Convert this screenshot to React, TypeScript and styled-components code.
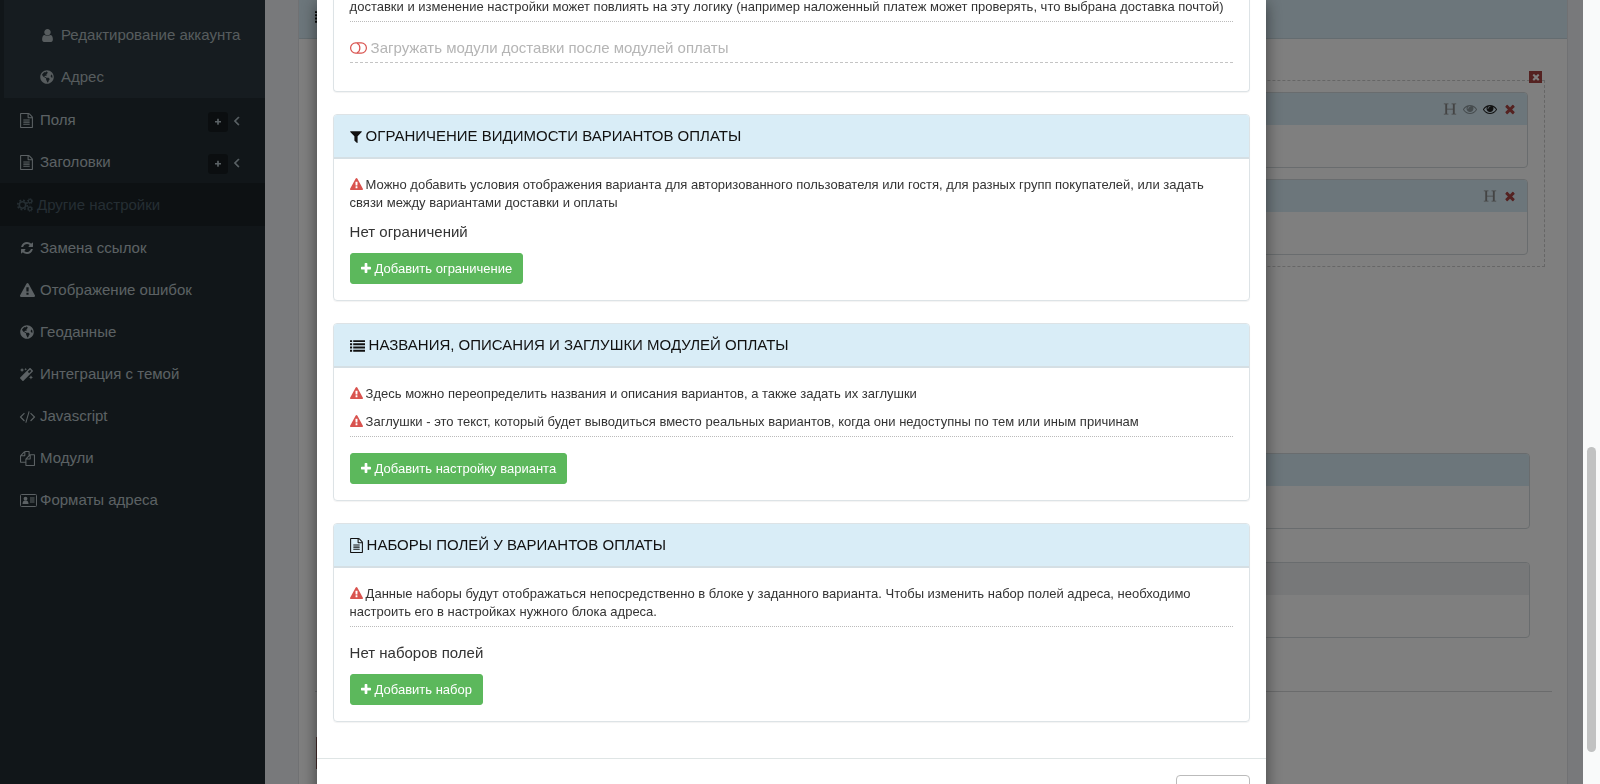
import React from 'react';
import styled, { createGlobalStyle, css } from 'styled-components';
import { FaGlobeAmericas, FaMagic } from 'react-icons/fa';

const Global = createGlobalStyle`
  * { box-sizing: border-box; }
  html, body { margin: 0; height: 100%; overflow: hidden; }
  body {
    background: #f1f2f6;
    color: #333;
    font: 15px/20px "Liberation Sans", Arial, sans-serif;
  }
  p, h1, h2, ul { margin: 0; padding: 0; }
`;

/* ---------- icons ---------- */

const paths = {
  user: 'M1536 1399q0 109-62.5 187t-150.5 78h-854q-88 0-150.5-78t-62.5-187q0-85 8.5-160.5t31.5-152 58.5-131 94-89 134.5-34.5q131 128 313 128t313-128q76 0 134.5 34.5t94 89 58.5 131 31.5 152 8.5 160.5zm-256-887q0 159-112.5 271.5t-271.5 112.5-271.5-112.5-112.5-271.5 112.5-271.5 271.5-112.5 271.5 112.5 112.5 271.5z',
  file: 'M1596 380q28 28 48 76t20 88v1152q0 40-28 68t-68 28h-1344q-40 0-68-28t-28-68v-1600q0-40 28-68t68-28h896q40 0 88 20t76 48zm-444-244v376h376q-10-29-22-41l-313-313q-12-12-41-22zm384 1528v-1024h-416q-40 0-68-28t-28-68v-416h-768v1536h1280zm-1024-864q0-14 9-23t23-9h704q14 0 23 9t9 23v64q0 14-9 23t-23 9h-704q-14 0-23-9t-9-23v-64zm736 224q14 0 23 9t9 23v64q0 14-9 23t-23 9h-704q-14 0-23-9t-9-23v-64q0-14 9-23t23-9h704zm0 256q14 0 23 9t9 23v64q0 14-9 23t-23 9h-704q-14 0-23-9t-9-23v-64q0-14 9-23t23-9h704z',
  refresh: 'M1639 1056q0 5-1 7-64 268-268 434.5t-478 166.5q-146 0-282.5-55t-243.5-157l-129 129q-19 19-45 19t-45-19-19-45v-448q0-26 19-45t45-19h448q26 0 45 19t19 45-19 45l-137 137q71 66 161 102t187 36q134 0 250-65t186-179q11-17 53-117 8-23 30-23h192q13 0 22.5 9.5t9.5 22.5zm25-800v448q0 26-19 45t-45 19h-448q-26 0-45-19t-19-45 19-45l138-138q-148-137-349-137-134 0-250 65t-186 179q-11 17-53 117-8 23-30 23h-199q-13 0-22.5-9.5t-9.5-22.5v-7q65-268 270-434.5t480-166.5q146 0 284 55.5t245 156.5l130-129q19-19 45-19t45 19 19 45z',
  warning: 'M1024 1375v-190q0-14-9.5-23.5t-22.5-9.5h-192q-13 0-22.5 9.5t-9.5 23.5v190q0 14 9.5 23.5t22.5 9.5h192q13 0 22.5-9.5t9.5-23.5zm-2-374l18-459q0-12-10-19-13-11-24-11h-220q-11 0-24 11-10 7-10 21l17 457q0 10 10 16.5t24 6.5h185q14 0 23.5-6.5t10.5-16.5zm-14-934l768 1408q35 63-2 126-17 29-46.5 46t-63.5 17h-1536q-34 0-63.5-17t-46.5-46q-37-63-2-126l768-1408q17-31 47-49t65-18 65 18 47 49z',
  filter: 'M1595 295q17 41-14 70l-493 493v742q0 42-39 59-13 5-25 5-27 0-45-19l-256-256q-19-19-19-45v-486l-493-493q-31-29-14-70 17-39 59-39h1280q42 0 59 39z',
  list: 'M0 256h256v224h-256zM384 256h1408v224h-1408zM0 640h256v224h-256zM384 640h1408v224h-1408zM0 1024h256v224h-256zM384 1024h1408v224h-1408zM0 1408h256v224h-256zM384 1408h1408v224h-1408z',
  plus: 'M1600 736v192q0 40-28 68t-68 28h-416v416q0 40-28 68t-68 28h-192q-40 0-68-28t-28-68v-416h-416q-40 0-68-28t-28-68v-192q0-40 28-68t68-28h416v-416q0-40 28-68t68-28h192q40 0 68 28t28 68v416h416q40 0 68 28t28 68z',
  times: 'M1490 1322q0 40-28 68l-136 136q-28 28-68 28t-68-28l-294-294-294 294q-28 28-68 28t-68-28l-136-136q-28-28-28-68t28-68l294-294-294-294q-28-28-28-68t28-68l136-136q28-28 68-28t68 28l294 294 294-294q28-28 68-28t68 28l136 136q28 28 28 68t-28 68l-294 294 294 294q28 28 28 68z',
  code: 'M553 1399l-50 50q-10 10-23 10t-23-10l-466-466q-10-10-10-23t10-23l466-466q10-10 23-10t23 10l50 50q10 10 10 23t-10 23l-393 393 393 393q10 10 10 23t-10 23zm591-1067l-373 1291q-4 13-15.5 19.5t-23.5 2.5l-62-17q-13-4-19.5-15.5t-2.5-24.5l373-1291q4-13 15.5-19.5t23.5-2.5l62 17q13 4 19.5 15.5t2.5 24.5zm657 651l-466 466q-10 10-23 10t-23-10l-50-50q-10-10-10-23t10-23l393-393-393-393q-10-10-10-23t10-23l50-50q10-10 23-10t23 10l466 466q10 10 10 23t-10 23z',
  eye: 'M1664 960q-152-236-381-353 61 104 61 225 0 185-131.5 316.5t-316.5 131.5-316.5-131.5-131.5-316.5q0-121 61-225-229 117-381 353 133 205 333.5 326.5t434.5 121.5 434.5-121.5 333.5-326.5zm-720-384q0-20-14-34t-34-14q-125 0-214.5 89.5t-89.5 214.5q0 20 14 34t34 14 34-14 14-34q0-86 61-147t147-61q20 0 34-14t14-34zm848 384q0 34-20 69-140 230-376.5 368.5t-499.5 138.5-499.5-139-376.5-368q-20-35-20-69t20-69q140-229 376.5-368t499.5-139 499.5 139 376.5 368q20 35 20 69z',
  angle: 'M1203 544q0 13-10 23l-393 393 393 393q10 10 10 23t-10 23l-50 50q-10 10-23 10t-23-10l-466-466q-10-10-10-23t10-23l466-466q10-10 23-10t23 10l50 50q10 10 10 23z',
  copy: 'M1696 384q40 0 68 28t28 68v1216q0 40-28 68t-68 28h-960q-40 0-68-28t-28-68v-288h-544q-40 0-68-28t-28-68v-672q0-40 20-88t48-76l408-408q28-28 76-48t88-20h416q40 0 68 28t28 68v328q68-40 128-40h416zm-544 213l-299 299h299v-299zm-640-384l-299 299h299v-299zm196 647l316-316v-416h-384v416q0 40-28 68t-68 28h-416v640h512v-256q0-40 20-88t48-76zm956 804v-1152h-384v416q0 40-28 68t-68 28h-416v640h896z',
  header: 'M100 200h600v100h-170v560h732v-560h-170v-100h600v100h-190v1200h190v100h-600v-100h170v-540h-732v540h170v100h-600v-100h190v-1200h-190z',
};

/* horizontal extent of the glyphs that are narrower than their square box */
const extents: Partial<Record<keyof typeof paths, [number, number]>> = {
  file: [128, 1536],
  filter: [192, 1408],
  plus: [192, 1408],
};

const Svg = styled.svg`
  display: block;
  flex: none;
  overflow: visible;
  fill: currentColor;
`;

const Icon = ({ name, size = 15 }: { name: keyof typeof paths; size?: number }) => {
  const [x, w] = extents[name] ?? [0, 1792];
  return (
    <Svg width={Math.round((size * w) / 1792)} height={size} viewBox={`${x} 0 ${w} 1792`} aria-hidden="true">
      <path fillRule="evenodd" d={paths[name]} />
    </Svg>
  );
};

const ToggleIcon = () => (
  <Svg width="17" height="12" viewBox="0 0 17 12" aria-hidden="true">
    <g fill="none" stroke="currentColor" strokeWidth="1.2">
      <rect x=".6" y=".9" width="15.8" height="10.2" rx="5.1" />
      <path d="M7 1.2c3.8 1.6 3.8 8 0 9.6" />
    </g>
  </Svg>
);

const CardIcon = () => (
  <Svg width="17" height="13" viewBox="0 0 17 13" aria-hidden="true">
    <rect x=".5" y=".5" width="16" height="12" rx="1" fill="none" stroke="currentColor" />
    <circle cx="5.5" cy="4.7" r="1.9" />
    <path d="M2.5 10c0-2.6 1-3.6 3-3.6s3 1 3 3.6zM10 3.5h4.5v1H10zM10 5.5h4.5v1H10zM10 7.5h4.5v1H10z" />
  </Svg>
);

const GearsIcon = () => (
  <Svg width="16" height="14" viewBox="0 0 16 14" aria-hidden="true">
    <g fill="none" stroke="currentColor">
      <circle cx="5.5" cy="7" r="3.2" strokeWidth="1.6" />
      <circle cx="5.5" cy="7" r="4.8" strokeWidth="1.6" strokeDasharray="1.9 1.87" />
      <circle cx="13" cy="3.2" r="1.7" strokeWidth="1.2" />
      <circle cx="13" cy="3.2" r="2.6" strokeDasharray="1.1 .94" />
      <circle cx="13" cy="10.8" r="1.7" strokeWidth="1.2" />
      <circle cx="13" cy="10.8" r="2.6" strokeDasharray="1.1 .94" />
    </g>
  </Svg>
);

/* ---------- page behind the dialog ---------- */

const Page = styled.div`
  display: flex;
  height: 100vh;
  padding-right: 17px;
  overflow: hidden;
`;

const Sidebar = styled.nav`
  flex: 0 0 265px;
  display: flex;
  flex-direction: column;
  background: #222d32;
  overflow: hidden;
`;

const Submenu = styled.ul`
  list-style: none;
  && {
    margin: 0 0 1px 4px;
    padding-top: 14px;
  }
  background: #2c3940;
`;

const Menu = styled.ul`
  list-style: none;
  h2 + && { padding-top: 1px; }
`;

const MenuRow = styled.li`
  display: flex;
  align-items: center;
  height: 42px;
  padding-right: 21px;
`;

const MenuLink = styled.a<{ $nested?: boolean }>`
  display: flex;
  flex: 1;
  align-items: center;
  padding-left: ${(p) => (p.$nested ? 36 : 20)}px;
  color: ${(p) => (p.$nested ? '#aeb8bc' : '#b8c3c8')};
  line-height: 42px;
  text-decoration: none;
  white-space: nowrap;
`;

const MenuIcon = styled.span<{ $nested?: boolean }>`
  display: flex;
  width: ${(p) => (p.$nested ? 21 : 20)}px;
`;

const MenuHeader = styled.h2`
  display: flex;
  align-items: center;
  gap: 4px;
  height: 43px;
  background: #1a2226;
  color: #4b5d66;
  font-size: 15px;
  font-weight: normal;
  && { padding-left: 17px; }
`;

const AddButton = styled.button`
  width: 20px;
  height: 20px;
  margin: 4px 1px 0 0;
  padding: 0;
  border: 0;
  border-radius: 3px;
  background: #161d20;
  color: #b8c7ce;
  display: grid;
  place-items: center;
`;

const CollapseButton = styled.button`
  padding: 0;
  border: 0;
  background: none;
  color: #b8c7ce;
  stroke: currentColor;
  stroke-width: 60;
`;

const Main = styled.main`
  flex: 1;
  min-width: 0;
  margin: 0 15px 0 33px;
  border: solid #e0e3e6;
  border-width: 0 1px;
  background: #fff;
`;

const MainHead = styled.div`
  height: 39px;
  padding: 9px 16px 0;
  background: #d9edf7;
  border-bottom: 1px solid #c8d9e0;
  color: #111;
`;

const MainBody = styled.div`
  display: flow-root;
  padding: 41px 15px 0 16px;
`;

const Step = styled.section`
  position: relative;
  margin: 0 7px 0 4px;
  height: 187px;
  padding: 11px 16px;
  border: 1px dashed #ccc;
`;

const RemoveStep = styled.button`
  position: absolute;
  top: -10px;
  right: 2px;
  width: 13px;
  height: 12px;
  padding: 0;
  border: 0;
  background: #a94442;
  color: #fff;
  display: grid;
  place-items: center;
`;

const Block = styled.section`
  height: 76px;
  border: 1px solid #d2d9dc;
  border-radius: 4px;
  overflow: hidden;
  & + & { margin-top: 11px; }
`;

const BlockHead = styled.div<{ $muted?: boolean }>`
  display: flex;
  align-items: center;
  justify-content: flex-end;
  gap: 6px;
  height: 32px;
  padding-right: 10px;
  background: ${(p) => (p.$muted ? '#eff0f2' : '#d9edf7')};
`;

const Tool = styled.button<{ $color: string }>`
  padding: 0;
  border: 0;
  background: none;
  color: ${(p) => p.$color};
`;

const LowerBlocks = styled.div`
  display: grid;
  gap: 22px;
  margin: 186px 22px 0 16px;
`;

const PageRule = styled.hr`
  margin: 53px 0 45px;
  border: 0;
  border-top: 1px solid #d4d6d8;
`;

const RemoveButton = styled.button`
  display: block;
  width: 40px;
  height: 32px;
  margin-left: 1px;
  border: 1px solid #8a5a58;
  background: #a94442;
`;

/* ---------- dialog ---------- */

const Backdrop = styled.div`
  position: fixed;
  inset: 0 17px 0 0;
  background: rgba(0, 0, 0, 0.5);
  overflow: hidden;
`;

const Dialog = styled.div`
  width: 60%;
  min-width: 600px;
  min-height: 100%;
  margin: 0 auto;
  background: #fff;
  box-shadow: 0 5px 15px rgba(0, 0, 0, 0.5);
`;

const DialogBody = styled.div`
  display: grid;
  gap: 22px;
  margin-top: -2px;
  padding: 0 16px 36px;
`;

const Panel = styled.section<{ $scrolled?: boolean }>`
  border: 1px solid #dde3e6;
  border-radius: 4px;
  box-shadow: 0 1px 1px rgba(0, 0, 0, 0.05);
  overflow: hidden;
  ${(p) => p.$scrolled && css`
    border-top: 0;
    border-radius: 0 0 4px 4px;
  `}
`;

const PanelHead = styled.h2`
  display: flex;
  align-items: center;
  gap: 4px;
  height: 44px;
  border-bottom: 2px solid #d5dfe4;
  background: #d9edf7;
  color: #111;
  font-size: 15px;
  font-weight: normal;
  text-transform: uppercase;
  white-space: nowrap;
  && { padding: 0 16px; }
`;

const PanelBody = styled.div<{ $scrolled?: boolean }>`
  padding: ${(p) => (p.$scrolled ? '0 16px 28px' : '17px 16px 16px')};
`;

const Hint = styled.p<{ $ruled?: boolean }>`
  && { margin-bottom: ${(p) => (p.$ruled ? 16 : 10)}px; }
  font-size: 13px;
  line-height: 18px;
  ${(p) => p.$ruled && css`
    && { padding-bottom: 5px; }
    border-bottom: 1px dotted #bbb;
  `}
`;

const HintIcon = styled.span`
  display: inline-block;
  margin-right: 3px;
  color: #d9534f;
  vertical-align: -2px;
`;

const ToggleRow = styled.button`
  display: flex;
  align-items: center;
  gap: 4px;
  width: 100%;
  padding: 0 0 4px;
  border: 0;
  border-bottom: 1px dashed #c4c4c4;
  background: none;
  color: #b5b5b5;
  font: inherit;
  & > svg { color: #d9534f; }
`;

const Empty = styled.p`
  && { margin-bottom: 11px; }
`;

const AddItem = styled.button`
  display: flex;
  align-items: center;
  gap: 4px;
  height: 31px;
  padding: 0 10px;
  border: 1px solid #5cb85c;
  border-radius: 3px;
  background: #5cb85c;
  color: #fff;
  font: 13px/18px "Liberation Sans", Arial, sans-serif;
`;

const DialogFooter = styled.footer`
  display: flex;
  justify-content: flex-end;
  padding: 16px;
  border-top: 1px solid #dfe5e5;
`;

const CloseButton = styled.button`
  padding: 12px 11px;
  border: 1px solid #bbb;
  border-radius: 4px;
  background: #fff;
  color: #333;
  font: 13px/18px "Liberation Sans", Arial, sans-serif;
`;

const Track = styled.div`
  position: fixed;
  inset: 0 0 0 auto;
  width: 17px;
  padding: 447px 4px 0;
  background: #f9fafa;
`;

const Thumb = styled.div`
  height: 305px;
  border-radius: 5px;
  background: #c1c2c2;
`;

const Warning = () => (
  <HintIcon><Icon name="warning" size={13} /></HintIcon>
);

const links: [React.ReactNode, string][] = [
  [<Icon name="refresh" size={14} />, 'Замена ссылок'],
  [<Icon name="warning" />, 'Отображение ошибок'],
  [<FaGlobeAmericas size={14} />, 'Геоданные'],
  [<FaMagic size={13} />, 'Интеграция с темой'],
  [<Icon name="code" />, 'Javascript'],
  [<Icon name="copy" />, 'Модули'],
  [<CardIcon />, 'Форматы адреса'],
];

export default function App() {
  return (
    <>
      <Global />
      <Page>
        <Sidebar>
          <Submenu>
            <MenuRow>
              <MenuLink href="#account" $nested><MenuIcon $nested><Icon name="user" /></MenuIcon>Редактирование аккаунта</MenuLink>
            </MenuRow>
            <MenuRow>
              <MenuLink href="#address" $nested><MenuIcon $nested><FaGlobeAmericas size={14} /></MenuIcon>Адрес</MenuLink>
            </MenuRow>
          </Submenu>
          <Menu>
            {['Поля', 'Заголовки'].map((label) => (
              <MenuRow key={label}>
                <MenuLink href="#"><MenuIcon><Icon name="file" /></MenuIcon>{label}</MenuLink>
                <AddButton aria-label="Добавить"><Icon name="plus" size={8} /></AddButton>
                <CollapseButton aria-label="Развернуть"><Icon name="angle" size={15} /></CollapseButton>
              </MenuRow>
            ))}
          </Menu>
          <MenuHeader><GearsIcon />Другие настройки</MenuHeader>
          <Menu>
            {links.map(([icon, label]) => (
              <MenuRow key={label}>
                <MenuLink href="#"><MenuIcon>{icon}</MenuIcon>{label}</MenuLink>
              </MenuRow>
            ))}
          </Menu>
        </Sidebar>
        <Main>
          <MainHead><Icon name="list" /></MainHead>
          <MainBody>
            <Step>
              <RemoveStep aria-label="Удалить шаг"><Icon name="times" size={10} /></RemoveStep>
              <Block>
                <BlockHead>
                  <Tool $color="#888" aria-label="Заголовок"><Icon name="header" size={14} /></Tool>
                  <Tool $color="#8d989d" aria-label="Скрыть"><Icon name="eye" size={14} /></Tool>
                  <Tool $color="#222" aria-label="Показать"><Icon name="eye" size={14} /></Tool>
                  <Tool $color="#a94442" aria-label="Удалить"><Icon name="times" size={14} /></Tool>
                </BlockHead>
              </Block>
              <Block>
                <BlockHead>
                  <Tool $color="#888" aria-label="Заголовок"><Icon name="header" size={14} /></Tool>
                  <Tool $color="#a94442" aria-label="Удалить"><Icon name="times" size={14} /></Tool>
                </BlockHead>
              </Block>
            </Step>
            <LowerBlocks>
              <Block><BlockHead /></Block>
              <Block><BlockHead $muted /></Block>
            </LowerBlocks>
            <PageRule />
            <RemoveButton aria-label="Удалить" />
          </MainBody>
        </Main>
      </Page>

      <Backdrop>
        <Dialog role="dialog" aria-modal="true">
          <DialogBody>
            <Panel $scrolled>
              <PanelBody $scrolled>
                <Hint $ruled>
                  доставки и изменение настройки может повлиять на эту логику (например наложенный платеж может проверять, что выбрана доставка почтой)
                </Hint>
                <ToggleRow><ToggleIcon />Загружать модули доставки после модулей оплаты</ToggleRow>
              </PanelBody>
            </Panel>

            <Panel>
              <PanelHead><Icon name="filter" />Ограничение видимости вариантов оплаты</PanelHead>
              <PanelBody>
                <Hint>
                  <Warning />Можно добавить условия отображения варианта для авторизованного пользователя или гостя, для разных групп покупателей, или задать связи между вариантами доставки и оплаты
                </Hint>
                <Empty>Нет ограничений</Empty>
                <AddItem><Icon name="plus" size={13} />Добавить ограничение</AddItem>
              </PanelBody>
            </Panel>

            <Panel>
              <PanelHead><Icon name="list" />Названия, описания и заглушки модулей оплаты</PanelHead>
              <PanelBody>
                <Hint><Warning />Здесь можно переопределить названия и описания вариантов, а также задать их заглушки</Hint>
                <Hint $ruled><Warning />Заглушки - это текст, который будет выводиться вместо реальных вариантов, когда они недоступны по тем или иным причинам</Hint>
                <AddItem><Icon name="plus" size={13} />Добавить настройку варианта</AddItem>
              </PanelBody>
            </Panel>

            <Panel>
              <PanelHead><Icon name="file" />Наборы полей у вариантов оплаты</PanelHead>
              <PanelBody>
                <Hint $ruled>
                  <Warning />Данные наборы будут отображаться непосредственно в блоке у заданного варианта. Чтобы изменить набор полей адреса, необходимо настроить его в настройках нужного блока адреса.
                </Hint>
                <Empty>Нет наборов полей</Empty>
                <AddItem><Icon name="plus" size={13} />Добавить набор</AddItem>
              </PanelBody>
            </Panel>
          </DialogBody>
          <DialogFooter><CloseButton>Закрыть</CloseButton></DialogFooter>
        </Dialog>
      </Backdrop>
      <Track><Thumb /></Track>
    </>
  );
}
